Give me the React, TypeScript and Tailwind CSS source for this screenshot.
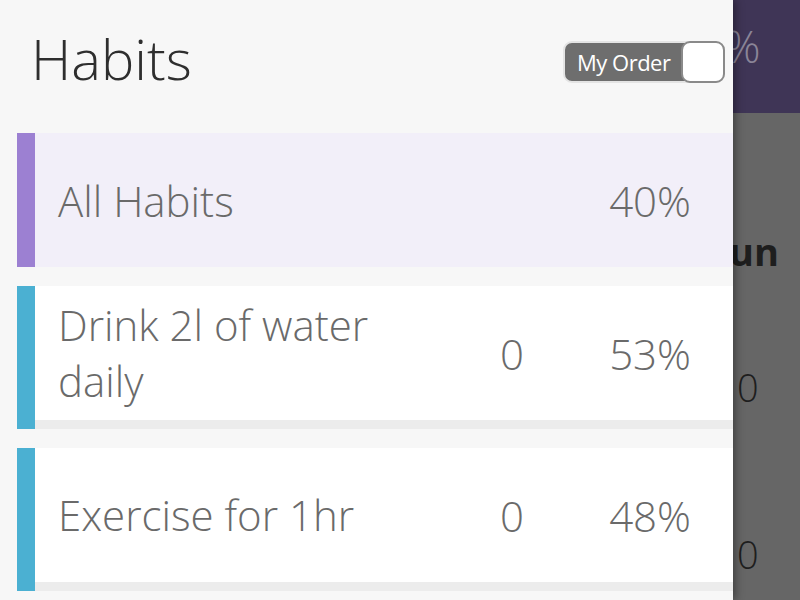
const rows = [
  { name: "Drink 2l of water daily", count: "0", pct: "53%" },
  { name: "Exercise for 1hr", count: "0", pct: "48%" },
];

function OrderToggle() {
  return (
    <div className="flex h-[42px] w-[162px] items-center rounded-[9px] border-2 border-[#e4e4e4] bg-[#6e6e6e] pl-[12px]">
      <span className="flex-1 text-[22px] leading-none text-white tracking-[-0.5px]">My Order</span>
      <div className="h-[42px] w-[44px] -mr-[2px] rounded-[9px] border-2 border-[#8a8a8a] bg-white" />
    </div>
  );
}

export default function App() {
  return (
    <div
      className="flex h-[600px] w-[800px] overflow-hidden"
      style={{ fontFamily: '"Open Sans", "Liberation Sans", sans-serif' }}
    >
      <div className="relative z-10 flex w-[733px] shrink-0 flex-col bg-[#f7f7f7] shadow-[3px_0_8px_rgba(0,0,0,0.35)]">
        <div className="flex h-[133px] items-start justify-between pl-[31px] pr-[8px] pt-[25px]">
          <h1 className="text-[56px] font-light leading-[1.2] text-[#2e2e2e]">Habits</h1>
          <div className="pt-[16px]">
            <OrderToggle />
          </div>
        </div>

        <div className="flex flex-col pl-[17px]">
          <div className="flex h-[134px]">
            <div className="w-[18px] bg-[#9c80d2]" />
            <div className="flex flex-1 items-center justify-between bg-[#f2eff9] pl-[23px] pr-[42px]">
              <span className="text-[42px] font-light text-[#6a6a6a]">All Habits</span>
              <span className="text-[42px] font-light text-[#6a6a6a]">40%</span>
            </div>
          </div>

          {rows.map((r) => (
            <div key={r.name} className="mt-[19px] flex h-[143px]">
              <div className="w-[18px] bg-[#4bb0d2]" />
              <div className="flex flex-1 items-center border-b-[9px] border-[#ececec] bg-white pl-[23px] pr-[42px]">
                <span className="w-[374px] text-[42px] font-light leading-[56px] text-[#6a6a6a]">{r.name}</span>
                <span className="w-[160px] text-center text-[42px] font-light text-[#6a6a6a]">{r.count}</span>
                <span className="flex-1 text-right text-[42px] font-light text-[#6a6a6a]">{r.pct}</span>
              </div>
            </div>
          ))}
        </div>
      </div>

      <div className="flex flex-1 flex-col">
        <div className="h-[113px] bg-[#3f3556] pt-[24px] text-[44px] font-light leading-none text-[#8b8598]">
          <span className="-ml-[8px]">%</span>
        </div>
        <div className="flex flex-1 flex-col bg-[#666666]">
          <span className="mt-[119px] -ml-[4px] text-[38px] font-bold leading-none text-[#1e1e1e]">un</span>
          <span className="mt-[98px] ml-[4px] text-[38px] font-light leading-none text-[#1e1e1e]">0</span>
          <span className="mt-[129px] ml-[4px] text-[38px] font-light leading-none text-[#1e1e1e]">0</span>
        </div>
      </div>
    </div>
  );
}
